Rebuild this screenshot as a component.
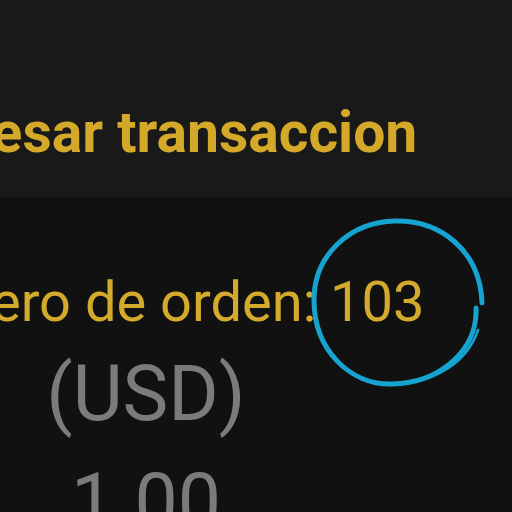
export default function App() {
  return (
    <div className="relative w-[512px] h-[512px] overflow-hidden bg-[#111111] font-['Roboto',sans-serif]">
      <div className="h-[197px] bg-[#191919] pt-[95px]">
        <h1 className="ml-[-127px] whitespace-nowrap text-[57px] leading-[76px] font-bold text-[#d4a92a]">
          Procesar transaccion
        </h1>
      </div>
      <div className="pt-[70px]">
        <p className="ml-[-129px] whitespace-nowrap text-[56px] leading-[70px] text-[#d4aa2c]">
          Numero de orden: 103
        </p>
        <div className="w-[292px] pt-[3px] text-center text-[77px] leading-[108px] text-[#7b7b7b]">
          <div>(USD)</div>
          <div>1.00</div>
        </div>
      </div>
      <svg
        className="absolute left-0 top-0 pointer-events-none"
        width="512"
        height="512"
        viewBox="0 0 512 512"
        fill="none"
      >
        <path
          d="M482 303 C480 250 440 220 395 221 C350 222 314 255 314 300 C314 350 350 385 392 384 C440 383 478 350 476 308"
          stroke="#17a3cf"
          strokeWidth="5"
          strokeLinecap="round"
        />
        <path
          d="M320 270 C330 245 355 226 385 222 M478 330 C468 360 440 380 400 384"
          stroke="#17a3cf"
          strokeWidth="2.5"
          strokeLinecap="round"
        />
      </svg>
    </div>
  );
}
